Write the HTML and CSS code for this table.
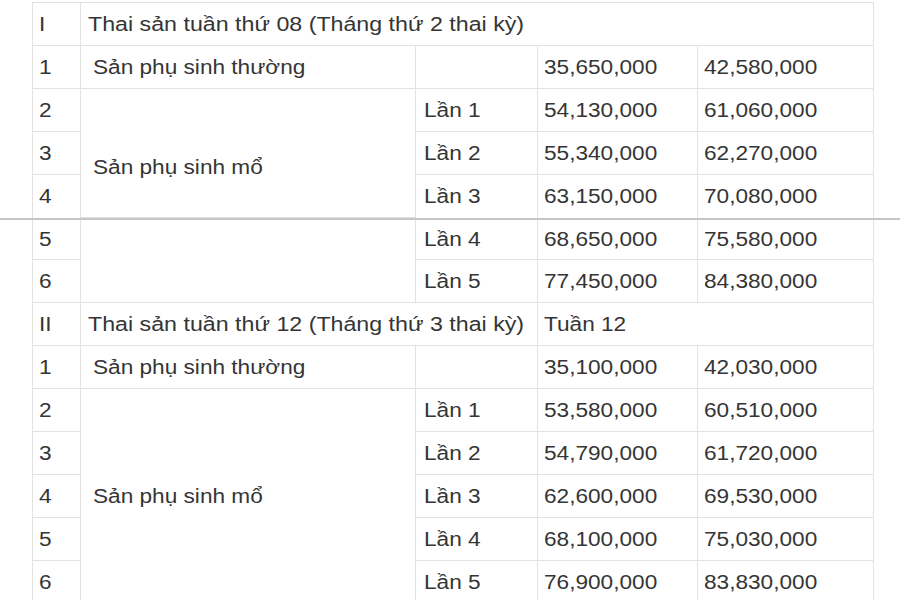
FILE: index.html
```html
<!DOCTYPE html>
<html lang="vi">
<head>
<meta charset="utf-8">
<title>Thai sản</title>
<link rel="stylesheet" href="styles.css">
</head>
<body>
<div class="page">
  <table class="grid top">
    <colgroup>
      <col class="c1"><col class="c2"><col class="c3"><col class="c4"><col class="c5">
    </colgroup>
    <tr>
      <td><span class="t">I</span></td>
      <td colspan="4" class="title"><span class="t">Thai sản tuần thứ 08 (Tháng thứ 2 thai kỳ)</span></td>
    </tr>
    <tr>
      <td><span class="t">1</span></td>
      <td class="kind"><span class="t">Sản phụ sinh thường</span></td>
      <td></td>
      <td class="num"><span class="t">35,650,000</span></td>
      <td class="num"><span class="t">42,580,000</span></td>
    </tr>
    <tr>
      <td><span class="t">2</span></td>
      <td rowspan="3" class="kind low"><span class="t">Sản phụ sinh mổ</span></td>
      <td class="lan"><span class="t">Lần 1</span></td>
      <td class="num"><span class="t">54,130,000</span></td>
      <td class="num"><span class="t">61,060,000</span></td>
    </tr>
    <tr>
      <td><span class="t">3</span></td>
      <td class="lan"><span class="t">Lần 2</span></td>
      <td class="num"><span class="t">55,340,000</span></td>
      <td class="num"><span class="t">62,270,000</span></td>
    </tr>
    <tr class="last">
      <td><span class="t">4</span></td>
      <td class="lan"><span class="t">Lần 3</span></td>
      <td class="num"><span class="t">63,150,000</span></td>
      <td class="num"><span class="t">70,080,000</span></td>
    </tr>
  </table>
  <div class="seam"></div>
  <table class="grid bottom">
    <colgroup>
      <col class="c1"><col class="c2"><col class="c3"><col class="c4"><col class="c5">
    </colgroup>
    <tr class="first">
      <td><span class="t">5</span></td>
      <td rowspan="2"></td>
      <td class="lan"><span class="t">Lần 4</span></td>
      <td class="num"><span class="t">68,650,000</span></td>
      <td class="num"><span class="t">75,580,000</span></td>
    </tr>
    <tr>
      <td><span class="t">6</span></td>
      <td class="lan"><span class="t">Lần 5</span></td>
      <td class="num"><span class="t">77,450,000</span></td>
      <td class="num"><span class="t">84,380,000</span></td>
    </tr>
    <tr>
      <td><span class="t">II</span></td>
      <td colspan="2" class="title"><span class="t">Thai sản tuần thứ 12 (Tháng thứ 3 thai kỳ)</span></td>
      <td colspan="2" class="num"><span class="t">Tuần 12</span></td>
    </tr>
    <tr>
      <td><span class="t">1</span></td>
      <td class="kind"><span class="t">Sản phụ sinh thường</span></td>
      <td></td>
      <td class="num"><span class="t">35,100,000</span></td>
      <td class="num"><span class="t">42,030,000</span></td>
    </tr>
    <tr>
      <td><span class="t">2</span></td>
      <td rowspan="5" class="kind"><span class="t">Sản phụ sinh mổ</span></td>
      <td class="lan"><span class="t">Lần 1</span></td>
      <td class="num"><span class="t">53,580,000</span></td>
      <td class="num"><span class="t">60,510,000</span></td>
    </tr>
    <tr>
      <td><span class="t">3</span></td>
      <td class="lan"><span class="t">Lần 2</span></td>
      <td class="num"><span class="t">54,790,000</span></td>
      <td class="num"><span class="t">61,720,000</span></td>
    </tr>
    <tr>
      <td><span class="t">4</span></td>
      <td class="lan"><span class="t">Lần 3</span></td>
      <td class="num"><span class="t">62,600,000</span></td>
      <td class="num"><span class="t">69,530,000</span></td>
    </tr>
    <tr>
      <td><span class="t">5</span></td>
      <td class="lan"><span class="t">Lần 4</span></td>
      <td class="num"><span class="t">68,100,000</span></td>
      <td class="num"><span class="t">75,030,000</span></td>
    </tr>
    <tr>
      <td><span class="t">6</span></td>
      <td class="lan"><span class="t">Lần 5</span></td>
      <td class="num"><span class="t">76,900,000</span></td>
      <td class="num"><span class="t">83,830,000</span></td>
    </tr>
  </table>
</div>
</body>
</html>
```

FILE: styles.css
```css
html, body {
  margin: 0;
  padding: 0;
  background: #ffffff;
}

body {
  font-family: "Liberation Sans", Arial, sans-serif;
  font-size: 19.5px;
  color: #353535;
  overflow: hidden;
}

.page {
  padding-top: 2px;
  width: 900px;
  height: 600px;
  overflow: hidden;
  box-sizing: border-box;
}

.grid {
  margin-left: 32px;
  width: 841px;
  border-collapse: collapse;
  table-layout: fixed;
}

.c1 { width: 48px; }
.c2 { width: 335px; }
.c3 { width: 122px; }
.c4 { width: 160px; }
.c5 { width: 176px; }

.grid td {
  border: 1px solid #e2e2e2;
  height: 43px;
  padding: 0 0 0 6px;
  vertical-align: middle;
  white-space: nowrap;
  box-sizing: border-box;
  line-height: 20px;
}

.top tr.last td { border-bottom: none; }
.bottom tr.first td { border-top: none; height: 39px; }

.grid td.title { padding-left: 7px; }
.grid td.kind { padding-left: 12px; }
.grid td.lan { padding-left: 8px; }
.grid td.num { padding-left: 6px; }
.grid td.low { padding-top: 28px; }

.t {
  display: inline-block;
  transform: scaleX(1.16);
  transform-origin: 0 50%;
}

.title .t { transform: scaleX(1.19); }

.seam {
  height: 2px;
  width: 100%;
  background: #c6c6c6;
}
```
